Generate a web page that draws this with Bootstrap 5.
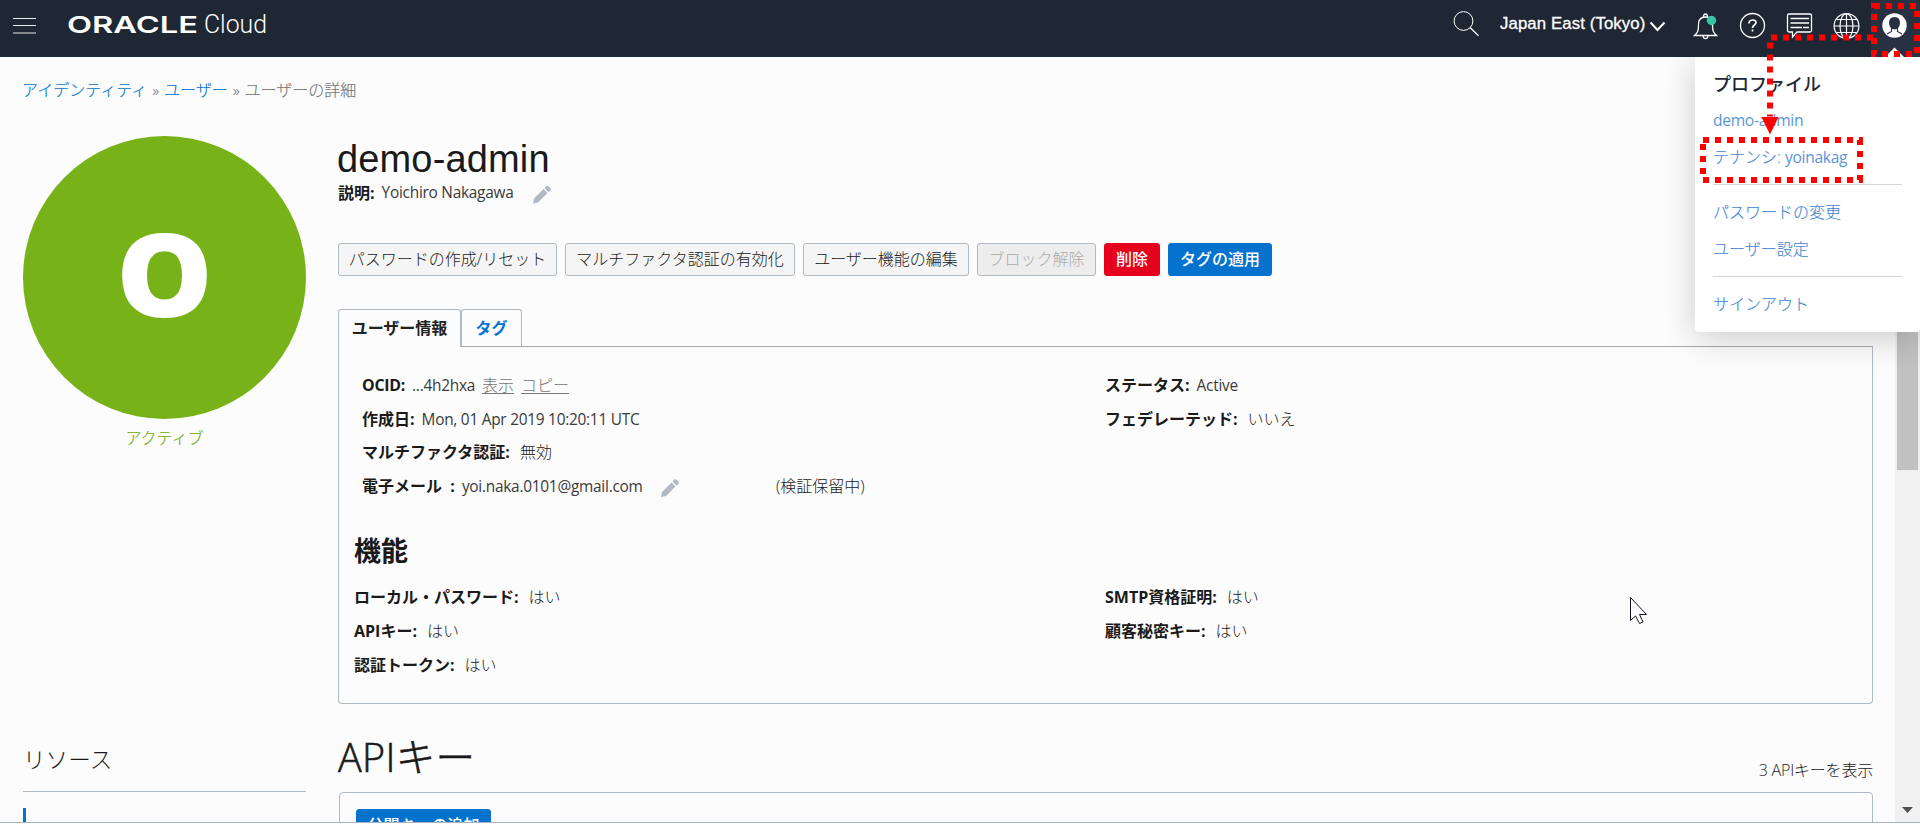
<!DOCTYPE html>
<html lang="ja">
<head>
<meta charset="utf-8">
<title>Oracle Cloud</title>
<link rel="stylesheet" href="https://cdn.jsdelivr.net/npm/bootstrap@5.3.0/dist/css/bootstrap.min.css">
<script src="https://cdn.jsdelivr.net/npm/bootstrap@5.3.0/dist/js/bootstrap.bundle.min.js"></script>
<style>
:root{--line:#b1b9c3;--blue:#0572ce}
html,body{height:824px;overflow:hidden}
body{background:#fff;color:#1a1a1a;font:300 16px/24px "Open Sans","Noto Sans CJK JP",sans-serif;position:relative}
a{color:var(--blue);text-decoration:none}
b,.fw-bold{font-weight:700!important}
.topbar{height:57px;background:#1e2733;color:#fff}
.topbar svg{display:block;flex:none}
.region{font:400 16.8px/24px "Liberation Sans",sans-serif;-webkit-text-stroke:.3px #fff;white-space:nowrap;letter-spacing:.1px}
.viewport{height:766px;background:#fcfcfc;border-bottom:1px solid #aab2c0;overflow:hidden}
.page{width:1895px;padding:0 22px 0 23px}
.crumbs{height:79px;padding-top:20px;color:#777;line-height:26px;margin-left:-1px;-webkit-text-stroke:.15px}
.crumbs .lat{margin:0 1px;font-weight:300}
.side{width:283px}
.main{width:1535px}
.avatar{width:283px;height:283px;background:#77b318;color:#fff;font:800 115px/273px "Open Sans",sans-serif}
.avatar span{display:block;transform:scaleX(1.06)}
.state{color:#6cab0c;height:36px;line-height:38px;-webkit-text-stroke:.15px}
.title{font:400 38px/44px "Liberation Sans",sans-serif;margin:0 0 0 -1px;padding-top:1px;letter-spacing:.15px}
.lat{font-size:15.4px;font-weight:400;letter-spacing:-.25px;color:#3a3a3a}
b.lat{font-size:15.9px;color:inherit}
a.lat,a .lat,.crumbs .lat{color:inherit}
.btn-oci{--bs-btn-font-size:16px;--bs-btn-line-height:31px;--bs-btn-padding-y:0;--bs-btn-padding-x:0;--bs-btn-border-radius:3px;--bs-btn-bg:#f5f5f5;--bs-btn-border-color:var(--line);--bs-btn-color:#1a1a1a;--bs-btn-font-weight:300;--bs-btn-disabled-bg:#ededed;--bs-btn-disabled-color:#aaa;--bs-btn-disabled-border-color:var(--line);--bs-btn-disabled-opacity:1;height:33px;white-space:nowrap}
.btn-del{--bs-btn-bg:#e7001d;--bs-btn-border-color:#e7001d;--bs-btn-color:#fff;--bs-btn-font-weight:500}
.btn-go{--bs-btn-bg:var(--blue);--bs-btn-border-color:var(--blue);--bs-btn-color:#fff;--bs-btn-font-weight:500}
.tabset{height:37px;position:relative;z-index:1}
.tabset a{display:block;height:37px;border:1px solid var(--line);border-radius:3px 3px 0 0;font-weight:700;line-height:36px;text-align:center}
.tabset .on{width:123px;height:38px;color:#222;background:#fcfcfc;border-bottom:0}
.tabset .off{width:61px;border-bottom:0}
.panel{height:358px;border:1px solid var(--line);border-radius:0 0 4px 4px;border-top-color:#a5a9ae;padding-top:22px}
.info{line-height:33.6px;height:33.6px;white-space:nowrap}
.colA{width:750px;padding-left:23px}
.colB{width:740px;padding-left:16px}
.feat .colA{padding-left:15px}
.v1{margin-left:7px}.v2{margin-left:10px}
.muted{color:#777;text-decoration:underline;text-underline-offset:2px}
.sect{font-size:27px;line-height:40px;font-weight:700;margin:28px 0 10px 15px}
.res{font-size:22.6px;line-height:40px;height:52px;border-bottom:1px solid var(--line);margin-top:285px}
.mark-bar{width:3px;height:40px;background:var(--blue);margin-top:16px}
.apih{font-size:39.5px;line-height:46px;font-weight:300;margin:0;-webkit-text-stroke:.6px;letter-spacing:.3px}
.panel2{width:1534px;height:80px;border:1px solid var(--line);border-radius:4px 4px 0 0;margin-left:1px;padding:16px}
.sbar{position:absolute;left:1895px;top:57px;width:25px;height:765px;background:#f0f0f0}
.sbar i{position:absolute;left:2px;top:24px;width:21px;height:389px;background:#c1c1c1}
.profile{position:absolute;left:1695px;top:57px;width:225px;height:275px;background:#fff;border-radius:0 0 4px 4px;box-shadow:0 6px 34px rgba(0,0,0,.2);padding:8px 18px;line-height:37px;clip-path:inset(0 0 -60px -80px)}
.profile a{display:block;height:37px;color:#3f84d0;-webkit-text-stroke:.12px}
.profile .lat{font-size:15.6px;-webkit-text-stroke:0;color:#5a95d8;letter-spacing:-.3px}
.profile hr{margin:8px 0 9px;border-color:#c9ccd2;border-top-width:1px;opacity:.8}
.profile h6{font-size:18px;line-height:38px;height:37px;font-weight:500;margin:0;color:#1e2733}
.over{position:absolute;left:0;top:0;pointer-events:none}
</style>
</head>
<body>
<header class="topbar d-flex">
<svg width="1440" height="57" fill="none" stroke="#fff">
<path d="M13 18.500h23M13 25.500h23M13 33h23" stroke-width="1.200" stroke="#e6e8ea"/>
<g fill="#fff" stroke="none"><text x="67" y="33" font-family="Inter" font-weight="600" font-size="23.500" textLength="131" lengthAdjust="spacingAndGlyphs">ORACLE</text>
<text x="204" y="33" font-family="Roboto" font-weight="300" font-size="25" textLength="63" lengthAdjust="spacingAndGlyphs">Cloud</text></g>
</svg>
<svg width="60" height="57" fill="none" stroke="#fff"><circle cx="23.500" cy="21" r="9.400"/><path d="M30 27.500l8.500 8.200" stroke-width="1.200"/></svg>
<span class="region" style="margin-top:12px;width:150px">Japan East (Tokyo)</span>
<svg width="221" height="57" fill="none" stroke="#fff">
<path d="M0.500 22.500l7 7.500 7-7.500" stroke-width="2"/>
<path d="M44.500 35.500h22c-3.500-3-4-5-4-11 0-5-3-7.500-7-7.500s-7 2.500-7 7.500c0 6-.5 8-4 11zM53.500 17c0-4 4-4 4 0M53 36c.5 3.500 4.500 3.500 5 0" stroke-width="1.300"/>
<circle cx="61.500" cy="20.500" r="4.700" fill="#37c5a5" stroke="none"/>
<circle cx="102.500" cy="25.500" r="12" stroke-width="1.300"/>
<path d="M99 23.500c0-4.500 7-4.500 7-1 0 2.500-3.500 2.500-3.500 5.500M102.500 29.500v2" stroke-width="1.700"/>
<path d="M139 14h21q1.500 0 1.500 1.500v15q0 1.500-1.500 1.500h-13l-4.500 5v-5h-3.500q-1.500 0-1.500-1.500v-15q0-1.500 1.500-1.500z" stroke-width="1.300"/>
<path d="M140.500 18.500h18.500M140.500 23h18.500M140.500 27.500h11.500M153 27.500h6" stroke-width="1.300"/>
<g stroke-width="1.200"><circle cx="196.500" cy="26" r="12.400"/><ellipse cx="196.500" cy="26" rx="6.500" ry="12.400"/><path d="M196.500 13.600v24.800M184 26h25M186.500 19.500h20M186.500 32.500h20"/></g>
</svg>
<svg width="49" height="57"><path fill="#273142" d="M0 0h49v57H0z"/>
<circle cx="23.500" cy="25.500" r="12.200" fill="#fff"/>
<path d="M23.500 17c-3.900 0-5.600 2.800-5.400 6.300.2 3.400 2.200 6.200 5.400 6.200s5.200-2.800 5.400-6.200c.2-3.500-1.500-6.300-5.400-6.300z" fill="#273142"/>
<path d="M20.500 28v3.500l-4.500 2.500M26.500 28v3.500l4.500 2.500" fill="none" stroke="#273142" stroke-width="1.100"/>
<path d="M14 57l9.500-9.500L33 57z" fill="#fff"/></svg>
</header>

<main class="viewport"><div class="page">
<nav class="crumbs"><a href="#">アイデンティティ</a> <span class="lat">»</span> <a href="#">ユーザー</a> <span class="lat">»</span> ユーザーの詳細</nav>
<div class="d-flex justify-content-between" style="margin-right:-1px">
<aside class="side">
<div class="avatar rounded-circle text-center"><span>O</span></div>
<div class="state text-center">アクティブ</div>
<div class="res">リソース</div>
<div class="mark-bar"></div>
</aside>
<section class="main" style="margin-right:1px">
<h1 class="title">demo-admin</h1>
<div class="d-flex align-items-center" style="height:23px"><b>説明:</b><span class="lat v1" style="width:133px;white-space:nowrap">Yoichiro Nakagawa</span>
<svg style="position:relative;top:2px;margin-left:16px" width="20" height="20" fill="#b1b9c3"><path d="M2 18.500l1-5 9.500-9.500 4 4L7 17.500zM13.500 3l2-2q1-.7 2 .2l2 2q.8 1 0 2l-2 2z"/></svg></div>
<div class="d-flex gap-2" style="margin-top:39px">
<button class="btn btn-oci" style="width:219px">パスワードの作成/リセット</button>
<button class="btn btn-oci" style="width:230px">マルチファクタ認証の有効化</button>
<button class="btn btn-oci" style="width:166px">ユーザー機能の編集</button>
<button class="btn btn-oci" style="width:119px" disabled>ブロック解除</button>
<button class="btn btn-oci btn-del" style="width:56px">削除</button>
<button class="btn btn-oci btn-go" style="width:104px">タグの適用</button>
</div>
<div class="tabset d-flex" style="margin-top:33px"><a class="on" href="#">ユーザー情報</a><a class="off" href="#">タグ</a></div>
<div class="panel">
<div class="d-flex">
<div class="colA">
<div class="info"><b class="lat">OCID:</b><span class="lat v1">...4h2hxa</span><span class="muted v1">表示</span><span class="muted v1">コピー</span></div>
<div class="info"><b>作成日:</b><span class="lat v1">Mon, 01 Apr 2019 10:20:11 UTC</span></div>
<div class="info"><b>マルチファクタ認証:</b><span class="v2">無効</span></div>
<div class="info d-flex align-items-center"><b>電子メール&nbsp; :</b><span class="lat v1" style="width:182px">yoi.naka.0101@gmail.com</span>
<svg style="margin:3px 96px 0 16px" width="20" height="20" fill="#b1b9c3"><path d="M1 19l1-5 9.500-9.500 4 4L6 18zM12.500 3.500l2-2q1-.7 2 .2l2 2q.8 1 0 2l-2 2z"/></svg><span>(検証保留中)</span></div>
</div>
<div class="colB">
<div class="info"><b>ステータス:</b><span class="lat v1">Active</span></div>
<div class="info"><b>フェデレーテッド:</b><span class="v2">いいえ</span></div>
</div>
</div>
<h3 class="sect">機能</h3>
<div class="d-flex feat">
<div class="colA">
<div class="info"><b>ローカル・パスワード:</b><span class="v2">はい</span></div>
<div class="info"><b>APIキー:</b><span class="v2">はい</span></div>
<div class="info"><b>認証トークン:</b><span class="v2">はい</span></div>
</div>
<div class="colB">
<div class="info"><b>SMTP資格証明:</b><span class="v2">はい</span></div>
<div class="info"><b>顧客秘密キー:</b><span class="v2">はい</span></div>
</div>
</div>
</div>
<div class="d-flex justify-content-between align-items-end" style="margin-top:30px;height:58px">
<h2 class="apih align-self-start">APIキー</h2><span style="line-height:46px;margin-bottom:-1px;letter-spacing:-.2px">3 APIキーを表示</span></div>
<div class="panel2"><button class="btn btn-oci btn-go" style="width:135px">公開キーの追加</button></div>
</section>
</div>
</div></main>

<div class="sbar"><i></i><svg width="25" height="765"><path d="M7 750h11l-5.500 6z" fill="#505050"/></svg></div>
<div class="profile"><h6>プロファイル</h6><a class="lat" href="#">demo-admin</a><a href="#">テナンシ: <span class="lat">yoinakag</span></a><hr><a href="#">パスワードの変更</a><a href="#">ユーザー設定</a><hr><a href="#">サインアウト</a></div>

<!-- callouts and pointer -->
<svg class="over" width="1920" height="824" fill="none">
<g stroke="#f00" stroke-width="6" stroke-dasharray="6 6">
<path d="M1874 6h43v48h-43z"/><path d="M1703 140h157v40h-157z"/><path d="M1873 37.500h-103v79"/></g>
<path d="M1761.500 117h17l-8.500 17.500z" fill="#f00"/>
<path d="M1630.500 597.500v23l5-4.500 4 7.500 3.500-1.500-3.500-7.500h7z" fill="#fff" stroke="#112" stroke-width="1"/>
</svg>
</body>
</html>
